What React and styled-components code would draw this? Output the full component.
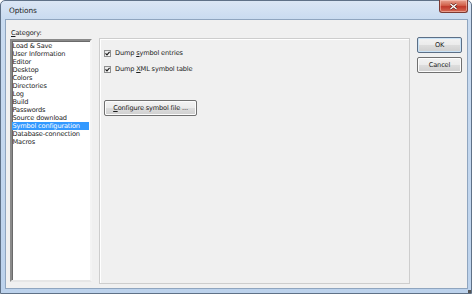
import React from "react";
import styled, { createGlobalStyle } from "styled-components";

const Global = createGlobalStyle`
  html, body { margin: 0; padding: 0; background: #fff; }
  body { font-family: "DejaVu Sans", "Liberation Sans", Arial, sans-serif; }
  * { box-sizing: border-box; }
`;

const Window = styled.div`
  width: 472px;
  height: 294px;
  border: 1px solid #5f7187;
  border-radius: 5px 5px 0 0;
  background: linear-gradient(#dbe6f4 0px, #c9dbf0 18px, #bcd2ec 100%);
  display: flex;
  flex-direction: column;
  position: relative;
  font-size: 6.6px;
  letter-spacing: -0.15px;
  color: #1c1c1c;
`;

const TitleBar = styled.div`
  height: 18px;
  display: flex;
  align-items: center;
  padding-left: 8px;
  font-size: 7.4px;
  letter-spacing: -0.1px;
  color: #1b1b1b;
`;

const CloseBtn = styled.div`
  position: absolute;
  top: -1px;
  right: 3px;
  width: 29px;
  height: 13px;
  border: 1px solid #7d3a32;
  border-top: none;
  border-radius: 0 0 3px 3px;
  background: linear-gradient(#e8a492 0%, #d2614b 45%, #c0392b 55%, #d56b55 100%);
  box-shadow: inset 0 0 0 1px rgba(255, 210, 200, 0.5);
  display: flex;
  align-items: center;
  justify-content: center;
`;

const Client = styled.div`
  flex: 1;
  margin: 0 3px 4px 4px;
  border: 1px solid #8fa5bf;
  background: #f0f0f0;
  display: flex;
  align-items: flex-start;
  padding: 9px 5px 0 4px;
`;

const LeftCol = styled.div`
  width: 82px;
  display: flex;
  flex-direction: column;
`;

const Label = styled.div`
  height: 10px;
  line-height: 8px;
  padding-left: 1px;
`;

const U = styled.span`
  text-decoration: underline;
  text-underline-offset: 1px;
`;

const ListBox = styled.div`
  height: 243px;
  background: #fff;
  border-style: solid;
  border-width: 2px;
  border-color: #8a8a8a #f4f4f4 #e6e6e6 #8a8a8a;
  box-shadow: inset 1px 1px 0 #6a6a6a;
  padding: 1px 1px 0 0;
`;

const Item = styled.div`
  height: 8px;
  line-height: 8px;
  padding-left: 0.5px;
  white-space: nowrap;
  background: ${(p) => (p.$selected ? "#3399ff" : "transparent")};
  color: ${(p) => (p.$selected ? "#fff" : "#1c1c1c")};
`;

const Panel = styled.div`
  margin-left: 7px;
  margin-top: 9px;
  width: 311px;
  height: 246px;
  border: 1px solid #cdcdcd;
  box-shadow: inset 1px 1px 0 #fff;
  background: #f0f0f0;
  display: flex;
  flex-direction: column;
  align-items: flex-start;
  padding: 10px 0 0 4px;
`;

const CheckRow = styled.div`
  height: 8px;
  display: flex;
  align-items: center;
  gap: 4px;
  margin-bottom: ${(p) => p.$mb || 0}px;
  white-space: nowrap;
`;

const Box = styled.div`
  width: 7px;
  height: 7px;
  border: 1px solid #8e8f8f;
  background: linear-gradient(135deg, #e3e3e3, #fdfdfd);
  display: flex;
  align-items: center;
  justify-content: center;
`;

const PushButton = styled.div`
  width: ${(p) => p.$w}px;
  height: ${(p) => p.$h}px;
  margin-top: ${(p) => p.$mt || 0}px;
  border: 1px solid ${(p) => (p.$default ? "#5c6f86" : "#707070")};
  border-radius: 2px;
  background: linear-gradient(#f3f3f3 0%, #ebebeb 50%, #dddddd 51%, #cfcfcf 100%);
  box-shadow: inset 0 0 0 1px ${(p) => (p.$default ? "#c9e2f6" : "#fcfcfc")};
  display: flex;
  align-items: center;
  justify-content: center;
  white-space: nowrap;
  line-height: 8px;
`;

const RightCol = styled.div`
  margin-left: 7px;
  margin-top: 8px;
  display: flex;
  flex-direction: column;
  gap: 4px;
`;

const Grip = styled.div`
  position: absolute;
  right: 0;
  bottom: 0;
  width: 3px;
  height: 3px;
  background: #555;
`;

const items = [
  "Load & Save",
  "User Information",
  "Editor",
  "Desktop",
  "Colors",
  "Directories",
  "Log",
  "Build",
  "Passwords",
  "Source download",
  "Symbol configuration",
  "Database-connection",
  "Macros",
];

const Check = () => (
  <svg width="5" height="5" viewBox="0 0 5 5">
    <path d="M0.5 2.3 L2 3.8 L4.6 0.9" stroke="#1a1a1a" strokeWidth="1.2" fill="none" />
  </svg>
);

export default function App() {
  return (
    <>
      <Global />
      <Window>
        <TitleBar>Options</TitleBar>
        <CloseBtn>
          <svg width="9" height="7" viewBox="0 0 9 7">
            <path d="M1.5 1 L7.5 6 M7.5 1 L1.5 6" stroke="#5a1d14" strokeWidth="2.6" />
            <path d="M1.5 1 L7.5 6 M7.5 1 L1.5 6" stroke="#fff" strokeWidth="1.4" />
          </svg>
        </CloseBtn>
        <Client>
          <LeftCol>
            <Label>
              <U>C</U>ategory:
            </Label>
            <ListBox>
              {items.map((t) => (
                <Item key={t} $selected={t === "Symbol configuration"}>
                  {t}
                </Item>
              ))}
            </ListBox>
          </LeftCol>
          <Panel>
            <CheckRow $mb={8}>
              <Box>
                <Check />
              </Box>
              <span>
                Dump <U>s</U>ymbol entries
              </span>
            </CheckRow>
            <CheckRow>
              <Box>
                <Check />
              </Box>
              <span>
                Dump <U>X</U>ML symbol table
              </span>
            </CheckRow>
            <PushButton $w={93} $h={16} $mt={27}>
              <span>
                <U>C</U>onfigure symbol file ...
              </span>
            </PushButton>
          </Panel>
          <RightCol>
            <PushButton $w={45} $h={16} $default>
              OK
            </PushButton>
            <PushButton $w={45} $h={16}>
              Cancel
            </PushButton>
          </RightCol>
        </Client>
        <Grip />
      </Window>
    </>
  );
}
